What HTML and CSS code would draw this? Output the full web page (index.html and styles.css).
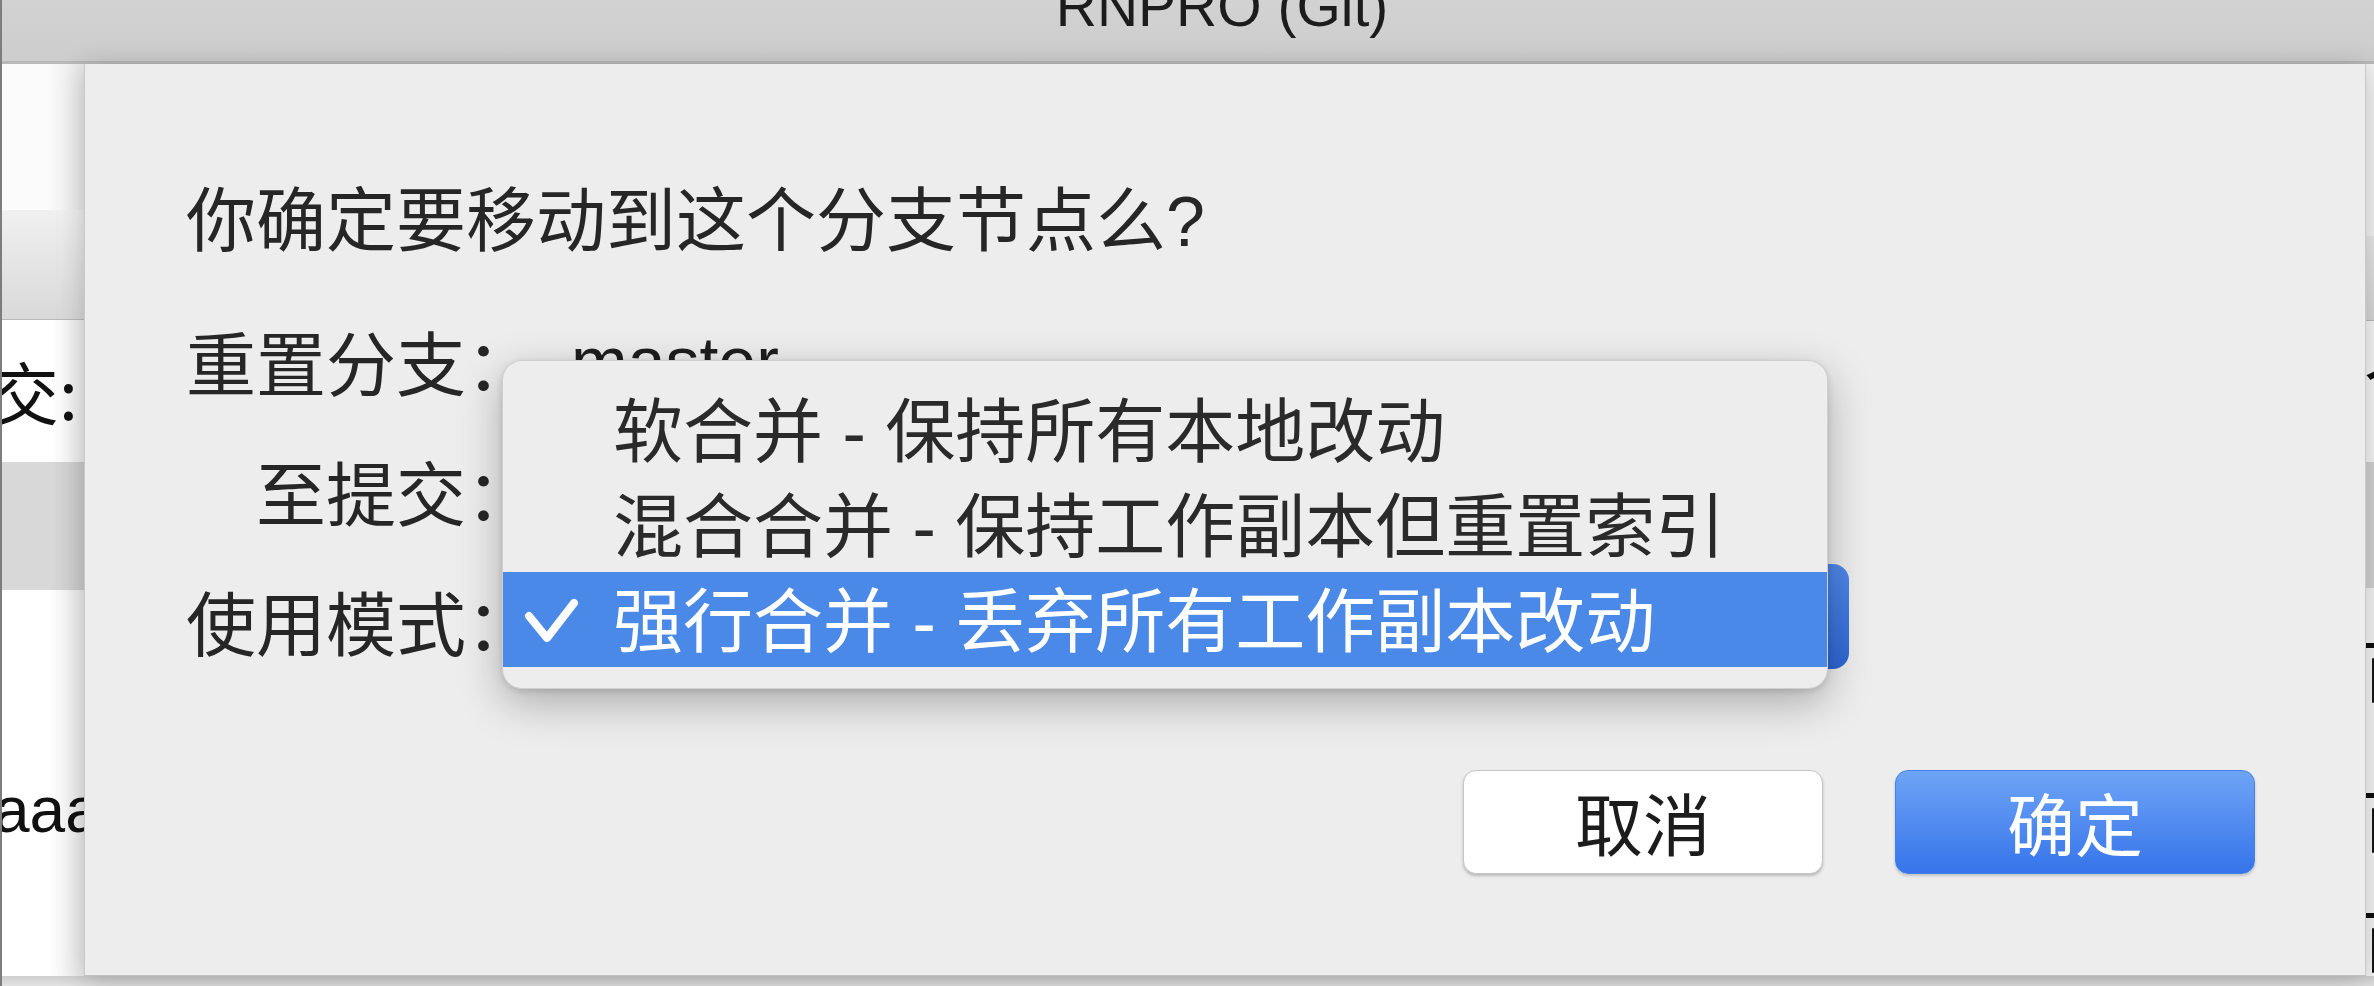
FILE: index.html
```html
<!DOCTYPE html>
<html lang="zh-CN">
<head>
<meta charset="utf-8">
<title>RNPRO (Git)</title>
<link rel="stylesheet" href="styles.css">
</head>
<body>
<div class="window">
  <header class="titlebar"><span class="title">RNPRO (Git)</span></header>
  <div class="main">
    <aside class="side side-left">
      <div class="sl-top"></div>
      <div class="sl-band"></div>
      <div class="sl-row"><span class="bg-text">交:</span></div>
      <div class="sl-gray"></div>
      <div class="sl-rest"><span class="bg-latin">aaaa</span></div>
    </aside>
    <section class="dialog">
      <p class="question">你确定要移动到这个分支节点么<span class="latin">?</span></p>
      <div class="form">
        <div class="row"><span class="label">重置分支：</span><span class="value">master</span></div>
        <div class="row"><span class="label">至提交：</span></div>
        <div class="row"><span class="label">使用模式：</span><div class="popup"></div></div>
      </div>
      <div class="buttons">
        <button class="btn">取消</button>
        <button class="btn primary">确定</button>
      </div>
      <div class="menu">
        <div class="item"><span class="check-slot"></span><span>软合并<span class="latin"> - </span>保持所有本地改动</span></div>
        <div class="item"><span class="check-slot"></span><span>混合合并<span class="latin"> - </span>保持工作副本但重置索引</span></div>
        <div class="item selected"><span class="check-slot"><svg class="check" viewBox="0 0 56 48" width="56" height="48"><polyline points="6,19 24,41 51,6" fill="none" stroke="#ffffff" stroke-width="8" stroke-linecap="round" stroke-linejoin="round"/></svg></span><span>强行合并<span class="latin"> - </span>丢弃所有工作副本改动</span></div>
      </div>
    </section>
    <aside class="side side-right">
      <div class="sr-top"></div>
      <div class="sr-band"></div>
      <div class="sr-row"><span class="bg-text">个</span></div>
      <div class="sr-gray"></div>
      <div class="sr-rest">
        <span class="bg-text g1">百</span>
        <span class="bg-text g2">百</span>
        <span class="bg-text g3">百</span>
      </div>
    </aside>
  </div>
  <div class="bottom"></div>
</div>
</body>
</html>
```

FILE: styles.css
```css
html, body {
  margin: 0;
  padding: 0;
}

body {
  width: 2374px;
  height: 986px;
  overflow: hidden;
  background: #dedede;
  font-family: "Noto Sans CJK SC", "Liberation Sans", sans-serif;
  color: #262626;
}

.window {
  height: 986px;
  display: flex;
  flex-direction: column;
  border-left: 2px solid #7d7d7d;
  box-sizing: border-box;
}

/* ---------- title bar ---------- */
.titlebar {
  height: 64px;
  flex: 0 0 64px;
  box-sizing: border-box;
  background: linear-gradient(#d2d2d2, #cdcdcd);
  border-bottom: 3px solid #b9b9b9;
  display: flex;
  justify-content: center;
  padding-left: 68px;
  overflow: hidden;
}

.title {
  font-family: "Liberation Sans", Arial, sans-serif;
  font-size: 57px;
  line-height: 56px;
  margin-top: -22px;
  color: #1c1c1c;
  white-space: nowrap;
}

/* ---------- main ---------- */
.main {
  flex: 0 0 912px;
  height: 912px;
  display: flex;
}

.side {
  display: flex;
  flex-direction: column;
  overflow: hidden;
  background: #fbfbfb;
}

.side-left {
  width: 82px;
  flex: 0 0 82px;
}

.side-right {
  flex: 1 1 auto;
}

.bg-text {
  font-family: "Noto Sans CJK SC", sans-serif;
  font-size: 68px;
  line-height: 68px;
  color: #111;
  white-space: nowrap;
  flex-shrink: 0;
}

.bg-latin {
  font-family: "Liberation Sans", Arial, sans-serif;
  font-size: 64px;
  line-height: 64px;
  color: #111;
  white-space: nowrap;
  margin-left: -8px;
}

.sl-top {
  height: 146px;
  flex: 0 0 146px;
  background: linear-gradient(to right, #fbfbfb 55%, #e9e9e9);
}

.sl-band {
  height: 109px;
  flex: 0 0 109px;
  background: linear-gradient(#f0f0f0, #d9d9d9);
  border-bottom: 1px solid #b9b9b9;
}

.sl-row {
  height: 142px;
  flex: 0 0 142px;
  display: flex;
  align-items: center;
  justify-content: flex-end;
  padding-right: 6px;
  background: linear-gradient(to right, #ffffff 60%, #ececec);
}

.sl-gray {
  height: 128px;
  flex: 0 0 128px;
  background: linear-gradient(to right, #d8d8d8 60%, #cbcbcb);
}

.sl-rest {
  flex: 1 1 auto;
  display: flex;
  align-items: flex-start;
  padding-top: 188px;
  background: linear-gradient(to right, #ffffff 55%, #eaeaea);
}

.sr-top {
  height: 172px;
  flex: 0 0 172px;
  background: #f3f3f3;
}

.sr-band {
  height: 84px;
  flex: 0 0 84px;
  background: linear-gradient(#e8e8e8, #d6d6d6);
  border-bottom: 1px solid #b9b9b9;
}

.sr-row {
  height: 141px;
  flex: 0 0 141px;
  background: #f6f6f6;
  display: flex;
  align-items: center;
}

.sr-row .bg-text {
  margin-left: -2px;
  margin-top: -30px;
}

.sr-gray {
  height: 126px;
  flex: 0 0 126px;
  background: #d2d2d2;
}

.sr-rest {
  flex: 1 1 auto;
  background: #f4f4f4;
  display: flex;
  flex-direction: column;
  padding-top: 46px;
}

.sr-rest .bg-text {
  margin-left: -6px;
}

.sr-rest .g2 {
  margin-top: 82px;
}

.sr-rest .g3 {
  margin-top: 52px;
}

/* ---------- dialog ---------- */
.dialog {
  position: relative;
  z-index: 1;
  width: 2282px;
  flex: 0 0 2282px;
  box-sizing: border-box;
  background: #ededed;
  border-left: 1px solid #c9c9c9;
  border-right: 1px solid #c9c9c9;
  border-bottom: 1px solid #c2c2c2;
  box-shadow: 0 4px 26px rgba(0, 0, 0, 0.22);
  display: flex;
  flex-direction: column;
  padding: 110px 110px 101px 101px;
}

.latin {
  font-family: "Liberation Sans", Arial, sans-serif;
}

.question {
  margin: 0 0 32px 0;
  font-size: 70px;
  line-height: 84px;
  color: #262626;
  white-space: nowrap;
}

.form {
  display: flex;
  flex-direction: column;
}

.row {
  height: 130px;
  display: flex;
  align-items: center;
}

.label {
  width: 350px;
  flex: 0 0 350px;
  text-align: right;
  font-size: 70px;
  line-height: 70px;
  white-space: nowrap;
  color: #262626;
}

.value {
  margin-left: 35px;
  font-family: "Liberation Sans", Arial, sans-serif;
  font-size: 68px;
  line-height: 68px;
  color: #1e1e1e;
}

.popup {
  margin-left: 3px;
  width: 1310px;
  height: 105px;
  margin-bottom: 10px;
  border-radius: 16px;
  background: linear-gradient(#5089ea, #2f66d4);
}

/* ---------- buttons ---------- */
.buttons {
  margin-top: auto;
  display: flex;
  justify-content: flex-end;
  gap: 72px;
}

.btn {
  width: 360px;
  height: 104px;
  box-sizing: border-box;
  border-radius: 13px;
  font-family: "Noto Sans CJK SC", sans-serif;
  font-size: 68px;
  line-height: 1;
  padding: 0;
  background: #ffffff;
  color: #1c1c1c;
  border: 1px solid #c6c6c6;
  box-shadow: 0 2px 3px rgba(0, 0, 0, 0.22);
}

.btn.primary {
  background: linear-gradient(#6ea4f6, #3674ea);
  border: 1px solid #4680e6;
  color: #ffffff;
  box-shadow: 0 2px 3px rgba(0, 0, 0, 0.18);
}

/* ---------- popup menu ---------- */
.menu {
  position: absolute;
  left: 417px;
  top: 296px;
  width: 1326px;
  box-sizing: border-box;
  padding: 21px 0;
  border-radius: 20px;
  background: #ededed;
  border: 1px solid rgba(0, 0, 0, 0.12);
  box-shadow: 0 14px 44px rgba(0, 0, 0, 0.28), 0 2px 6px rgba(0, 0, 0, 0.12);
  overflow: hidden;
}

.item {
  height: 95px;
  display: flex;
  align-items: center;
  padding-left: 20px;
  font-size: 70px;
  line-height: 70px;
  color: #2a2a2a;
  white-space: nowrap;
}

.item.selected {
  background: #4a89e7;
  color: #ffffff;
}

.check-slot {
  width: 90px;
  flex: 0 0 90px;
  display: flex;
  align-items: center;
}

.check {
  display: block;
  margin-top: 2px;
}

.bottom {
  flex: 0 0 10px;
  height: 10px;
  background: linear-gradient(#cfcfcf, #e2e2e2);
}
```
